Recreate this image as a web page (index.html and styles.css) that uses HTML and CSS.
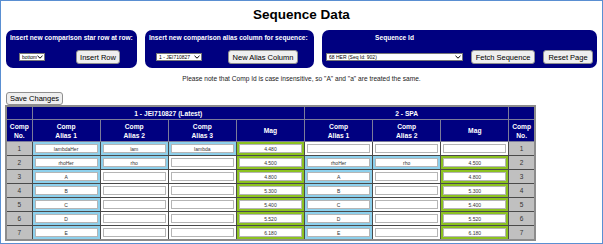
FILE: index.html
```html
<!DOCTYPE html>
<html lang="en">
<head>
    <meta charset="UTF-8">
    <title>Sequence Data</title>
    <link rel="stylesheet" href="styles.css">
</head>
<body>
<div class="frame">
    <h1 class="page-title">Sequence Data</h1>

    <div class="panels">
        <div class="panel panel-row">
            <div class="panel-label">Insert new comparison star row at row:</div>
            <div class="panel-controls">
                <select class="sel sel-row"><option>bottom</option></select>
                <button class="btn btn-insert">Insert Row</button>
            </div>
        </div>
        <div class="panel panel-alias">
            <div class="panel-label">Insert new comparison alias column for sequence:</div>
            <div class="panel-controls">
                <select class="sel sel-seq"><option>1 - JEI710827</option></select>
                <button class="btn btn-alias">New Alias Column</button>
            </div>
        </div>
        <div class="panel panel-seq">
            <div class="panel-label seq-label">Sequence Id</div>
            <div class="panel-controls">
                <select class="sel sel-id"><option>68 HER (Seq Id: 902)</option></select>
                <button class="btn btn-fetch">Fetch Sequence</button>
                <button class="btn btn-reset">Reset Page</button>
            </div>
        </div>
    </div>

    <p class="note">Please note that Comp Id is case insensitive, so "A" and "a" are treated the same.</p>

    <button class="btn btn-save">Save Changes</button>

    <table class="comp-table">
        <colgroup>
            <col class="col-no">
            <col class="col-w"><col class="col-w"><col class="col-w"><col class="col-w">
            <col class="col-w"><col class="col-w"><col class="col-w">
            <col class="col-no">
        </colgroup>
        <thead>
            <tr class="head-seq">
                <th></th>
                <th colspan="4">1 - JEI710827 (Latest)</th>
                <th colspan="3">2 - SPA</th>
                <th></th>
            </tr>
            <tr class="head-cols">
                <th>Comp<br>No.</th>
                <th>Comp<br>Alias 1</th>
                <th>Comp<br>Alias 2</th>
                <th>Comp<br>Alias 3</th>
                <th>Mag</th>
                <th>Comp<br>Alias 1</th>
                <th>Comp<br>Alias 2</th>
                <th>Mag</th>
                <th>Comp<br>No.</th>
            </tr>
        </thead>
        <tbody id="rows"></tbody>
    </table>
</div>

<script>
    // row: [alias1, alias2, alias3, mag] for seq 1, [alias1, alias2, mag] for seq 2
    const rows = [
        [['lambdaHer', 'lam', 'lambda', '4.480'], ['', '', '']],
        [['rhoHer', 'rho', '', '4.500'], ['rhoHer', 'rho', '4.500']],
        [['A', '', '', '4.800'], ['A', '', '4.800']],
        [['B', '', '', '5.300'], ['B', '', '5.300']],
        [['C', '', '', '5.400'], ['C', '', '5.400']],
        [['D', '', '', '5.520'], ['D', '', '5.520']],
        [['E', '', '', '6.180'], ['E', '', '6.180']]
    ];

    function cell(value, isMag) {
        let cls = '';
        if (value) cls = isMag ? 'mag' : 'alias';
        return `<td class="${cls}"><input class="cell-input" value="${value}"></td>`;
    }

    const body = document.getElementById('rows');
    body.innerHTML = rows.map((r, i) => {
        const [a, b] = r;
        let html = `<td class="no">${i + 1}</td>`;
        a.forEach((v, k) => html += cell(v, k === 3));
        b.forEach((v, k) => html += cell(v, k === 2));
        html += `<td class="no">${i + 1}</td>`;
        return `<tr>${html}</tr>`;
    }).join('');
</script>
</body>
</html>
```

FILE: styles.css
```css
body {
    margin: 0;
    font-family: "Liberation Sans", Arial, sans-serif;
    background-color: #fff;
}
.frame {
    width: 603px;
    height: 244px;
    box-sizing: border-box;
    border: 1px solid #5a8fd2;
    overflow: hidden;
}
.page-title {
    margin: 0;
    padding-top: 2px;
    font-size: 13.5px;
    line-height: 23px;
    text-align: center;
    color: #000;
}
.panels {
    display: flex;
    gap: 8px;
    margin: 4px 0 0 5px;
}
.panel {
    background-color: #000080;
    border-radius: 7px;
    height: 38px;
    box-sizing: border-box;
    padding: 2px 4px 0 4px;
}
.panel-row { width: 131px; }
.panel-alias { width: 169px; }
.panel-seq { width: 275px; }
.panel-label {
    color: #fff;
    font-weight: bold;
    font-size: 6.6px;
    line-height: 11px;
    white-space: nowrap;
}
.seq-label {
    width: 137px;
    text-align: center;
}
.panel-controls {
    display: flex;
    align-items: center;
    margin-top: 7px;
    height: 14px;
}
.sel {
    appearance: none;
    -webkit-appearance: none;
    height: 8px;
    padding: 0 7px 0 2px;
    font-size: 5px;
    line-height: 6px;
    font-family: "Liberation Sans", Arial, sans-serif;
    border: 1px solid #767676;
    border-radius: 0;
    background: #fff url("data:image/svg+xml,%3Csvg xmlns='http://www.w3.org/2000/svg' width='6' height='4' viewBox='0 0 6 4'%3E%3Cpath d='M0.5 0.8 L3 3.2 L5.5 0.8' fill='none' stroke='%23000' stroke-width='1'/%3E%3C/svg%3E") no-repeat right 1px center;
    box-sizing: border-box;
    color: #000;
}
.sel-row { width: 26px; margin-left: 9px; }
.sel-seq { width: 46px; margin-left: 7px; }
.sel-id { width: 137px; }
.btn {
    height: 14px;
    padding: 0;
    font-size: 7.5px;
    font-family: "Liberation Sans", Arial, sans-serif;
    background-color: #efefef;
    border: 1px solid #8f8f8f;
    border-radius: 3px;
    color: #000;
    box-sizing: border-box;
}
.btn-insert { width: 44px; margin-left: 31px; }
.btn-alias { width: 70px; margin-left: 26px; }
.btn-fetch { width: 64px; margin-left: 8px; }
.btn-reset { width: 50px; margin-left: 8px; }
.note {
    margin: 6px 0 0 0;
    font-size: 6.6px;
    line-height: 10px;
    text-align: center;
    color: #222;
}
.btn-save {
    display: block;
    width: 57px;
    height: 13px;
    margin: 8px 0 0 5px;
}
.comp-table {
    margin: 0 0 0 4px;
    width: 531px;
    table-layout: fixed;
    border-collapse: collapse;
    border: 2px solid #8c8c8c;
}
.col-no { width: 26px; }
.col-w { width: 68px; }
.comp-table th {
    background-color: #000080;
    color: #fff;
    font-weight: bold;
    font-size: 6.7px;
    line-height: 9px;
    border: 1px solid #7b7b9a;
    padding: 0;
}
.head-seq th { height: 12px; }
.head-cols th { height: 21px; }
.comp-table td {
    height: 13px;
    padding: 0;
    border: 1px solid #4a4a4a;
    background-color: #fff;
    text-align: center;
}
.comp-table td.no {
    background-color: #c0c0c0;
    color: #333;
    font-size: 6.5px;
}
.comp-table td.alias { background-color: #8dd0ec; }
.comp-table td.mag { background-color: #8cc220; }
.cell-input {
    display: block;
    margin: 0 auto;
    width: 63px;
    height: 9px;
    box-sizing: border-box;
    padding: 0;
    border: 1px solid #b5b5b5;
    background: #fff;
    font-size: 5px;
    font-family: "Liberation Sans", Arial, sans-serif;
    color: #333;
    text-align: center;
}
```
